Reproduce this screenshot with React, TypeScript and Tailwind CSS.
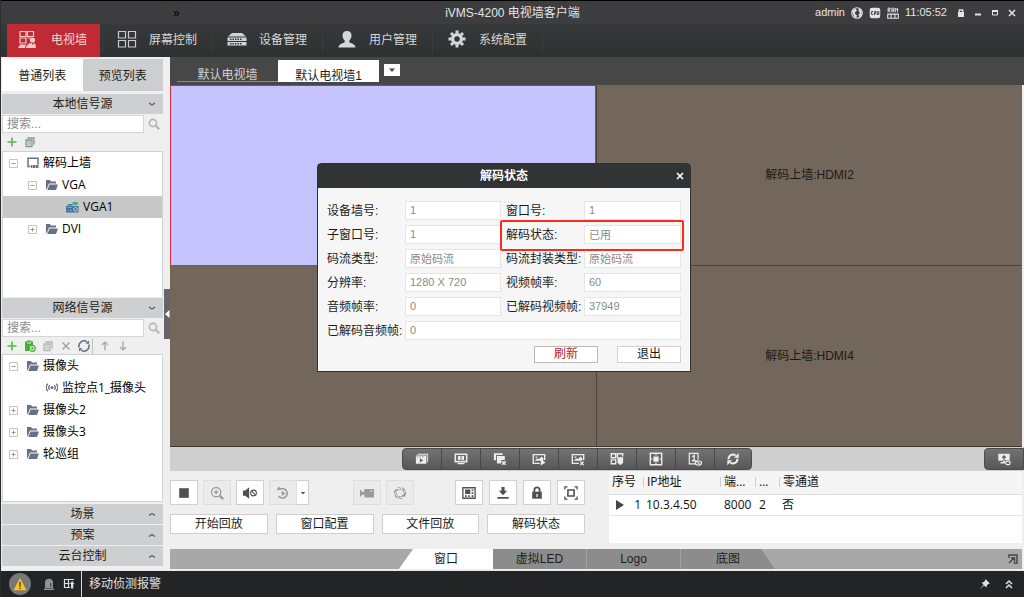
import { useState, type ReactNode } from "react";
import clsx from "clsx";

interface IconProps {
  children: ReactNode;
  className?: string;
  box?: string;
}

function Icon({ children, className = "size-4", box = "0 0 16 16" }: IconProps) {
  return (
    <svg viewBox={box} className={clsx("shrink-0", className)} fill="currentColor" aria-hidden="true">
      {children}
    </svg>
  );
}

const line = { fill: "none", stroke: "currentColor" };

/* ---------- icons ---------- */

const WallIcon = () => (
  <Icon className="size-5 text-[#f3c9c9]" box="0 0 20 20">
    <g {...line} strokeWidth="1.2">
      <path d="M3 1.5h6v5H3zM10.500 1.500h6v5h-6zM3 8h6v5H3zM10.500 8h3" />
    </g>
    <circle cx="15.500" cy="10" r="2.600" />
    <path d="M9 18c.5-3.500 3-5 5.500-5l1 2 1.500-2c1.500.5 2 2.500 2 5zM1 18l2-3.500h6L8 18z" />
  </Icon>
);

const GridIcon = () => (
  <Icon className="size-5 text-[#c9cbcb]" box="0 0 20 20">
    <path {...line} strokeWidth="1.200" d="M1.500 1.500h7v6.500h-7zM11.500 1.500h7v6.500h-7zM1.500 10.500h7V17h-7zM11.500 10.500h7V17h-7z" />
  </Icon>
);

const DeviceIcon = () => (
  <Icon className="size-5 text-[#d2d4d4]" box="0 0 20 20">
    <path d="M5 3h10l4 3.500H1zM.5 7.500h19v3.500H.5zM.5 12h19v3.500H.5z" />
    <path stroke="#303435" strokeWidth="1.500" strokeDasharray="1.500 1" d="M3 9.300h12M3 13.800h12" />
  </Icon>
);

const UserIcon = () => (
  <Icon className="size-5 text-[#d6d7d7]" box="0 0 20 20">
    <path d="M10 1c3 0 4.500 2 4.500 4.600 0 2-.9 3.900-2.200 5v1.600c.8 1 6.200 1.500 6.200 5.300H1.500c0-3.800 5.400-4.300 6.200-5.300v-1.600c-1.300-1.100-2.200-3-2.200-5C5.500 3 7 1 10 1z" />
  </Icon>
);

const GearIcon = () => (
  <Icon className="size-5 text-[#d6d7d7]" box="0 0 20 20">
    <circle cx="10" cy="9" r="4.400" {...line} strokeWidth="3.400" />
    <g stroke="currentColor" strokeWidth="3">
      <path d="M10 .5v3M10 14.500v3M1.500 9h3M15.500 9h3M4 3l2 2M14 13l2 2M4 15l2-2M14 5l2-2" />
    </g>
  </Icon>
);

const FolderIcon = () => (
  <Icon className="size-3 text-[#667186]" box="0 0 12 12">
    <path d="M0 1h4l1 1.500h5V4.500H3L.8 10H0z" />
    <path d="M3.500 5.500H12L10 11H1.300z" />
  </Icon>
);

const MonitorIcon = () => (
  <Icon className="size-3 text-[#667186]" box="0 0 12 12">
    <path {...line} strokeWidth="1.500" d="M3.500 9.500H1V1.200h10v6.300" />
    <path d="M4 8h1.500v3H4zM6 8h2v3H6zM8.500 8h3v3h-3z" />
  </Icon>
);

const EncoderIcon = () => (
  <Icon className="size-3.5 text-[#44749e]" box="0 0 14 14">
    <path d="M1 6h12.500v6.500H1z" />
    <circle cx="10.500" cy="9.300" r="1.800" fill="none" stroke="#c8d6e2" />
    <path d="M2 7.500h5M2 10.500h1.500M5 10.500h2" stroke="#7fa3c2" />
    <path d="M2 5.500 3.500 4h4v1.500z" />
    <path d="M7 3.500c1.500-2.500 5-2.500 6.500 0-1.500 2-5 2-6.500 0z" fill="#3fae82" />
  </Icon>
);

const SignalIcon = () => (
  <Icon className="size-3 text-[#667186]" box="0 0 12 12">
    <circle cx="6" cy="5.500" r="1.500" />
    <path {...line} strokeWidth="1.300" d="M3.800 3.200a3.300 3.300 0 0 0 0 4.600M8.200 3.200a3.300 3.300 0 0 1 0 4.600M1.800 1.800a5.200 5.200 0 0 0 0 7.400M10.200 1.800a5.200 5.200 0 0 1 0 7.400" />
  </Icon>
);

const PlusIcon = () => (
  <Icon className="size-3 text-[#5cb947]" box="0 0 12 12">
    <path {...line} strokeWidth="1.600" d="M6 1.500v9M1.500 6h9" />
  </Icon>
);

const CopyIcon = ({ className }: { className: string }) => (
  <Icon className={clsx("size-3", className)} box="0 0 12 12">
    <path {...line} strokeWidth="1.300" d="M4 2.500V2h6v6h-.5M2 4h6v6.500H2z" />
    <path {...line} d="M3 6h4M3 8h4" />
  </Icon>
);

const SearchIcon = () => (
  <Icon className="size-3 text-[#b5b5b7]" box="0 0 12 12">
    <circle cx="5" cy="5" r="3.600" {...line} strokeWidth="1.600" />
    <path {...line} strokeWidth="2.200" d="m7.800 7.800 3.400 3.400" />
  </Icon>
);

const Chevron = ({ up }: { up?: boolean }) => (
  <Icon className="size-2 text-[#626262]" box="0 0 8 8">
    <path {...line} strokeWidth="1.400" d={up ? "M1 5.500 4 3.500l3 2" : "M1 3l3 2 3-2"} />
  </Icon>
);

/* ---------- header ---------- */

function TitleBar() {
  return (
    <header className="grid h-6 grid-cols-[1fr_auto_1fr] items-center border-t border-black bg-[#3d3d40] text-[#e4e4e4]">
      <span className="pl-[172px] text-xs leading-4 text-black">»</span>
      <h1 className="text-xs font-normal">iVMS-4200 电视墙客户端</h1>
      <div className="flex items-center justify-end gap-1.5 pr-1">
        <span className="text-[11px]">admin</span>
        <Icon className="size-3">
          <circle cx="8" cy="8" r="7" {...line} strokeWidth="1.600" />
          <path d="M1.500 6 6 2l2 3-3 2 1 3 2 1-1 4-3-3zM10 2l4 3v5l-3 4-1-4 2-2-2-3z" />
        </Icon>
        <Icon className="size-3">
          <rect x="1" y="1" width="14" height="14" rx="3" />
          <path stroke="#3d3d40" strokeWidth="1.300" fill="none" d="M5.500 6H3.500v4h2M7.500 11V6H9v2.500H7.500M11 5.500V10h2V5.500" />
        </Icon>
        <Icon className="size-3">
          <path {...line} strokeWidth="1.300" d="M1.500 7V1.500H4V4H2l2.500 3M6.500 7V1.500h2.500V7M6.500 4.500H9M11 7V1.500l1.500 2 1.500-2V7" />
          <path {...line} strokeWidth="1.500" d="M1 9.500h14V15H1zM5.500 9.500V15M10.500 9.500V15" />
        </Icon>
        <time className="text-[11px]">11:05:52</time>
        <div className="flex gap-px">
          <button aria-label="锁定" className="grid size-4 place-items-center">
            <Icon className="size-2" box="0 0 8 8">
              <path d="M1 3h6v5H1z" />
              <path {...line} strokeWidth="1.300" d="M2.300 4V1h3.400v3" />
            </Icon>
          </button>
          <button aria-label="最小化" className="grid size-4 place-items-center">
            <Icon className="size-2" box="0 0 8 8"><path d="M1 4.500h6v2H1z" /></Icon>
          </button>
          <button aria-label="最大化" className="grid size-4 place-items-center">
            <Icon className="size-2" box="0 0 8 8"><path {...line} d="M1.500 2h5v4h-5z" /><path d="M1 1h6v2H1z" /></Icon>
          </button>
          <button aria-label="关闭" className="grid size-4 place-items-center">
            <Icon className="size-2" box="0 0 8 8"><path {...line} strokeWidth="1.500" d="m1 1 6 6M7 1 1 7" /></Icon>
          </button>
        </div>
      </div>
    </header>
  );
}

const navItems = [
  { label: "屏幕控制", icon: <GridIcon /> },
  { label: "设备管理", icon: <DeviceIcon /> },
  { label: "用户管理", icon: <UserIcon /> },
  { label: "系统配置", icon: <GearIcon /> },
];

function MainNav() {
  return (
    <nav className="flex h-[33px] bg-linear-to-b from-[#35393a] to-[#2d3132] pl-1.5 text-xs text-[#d8d8d8]">
      <button className="mr-0.5 flex w-[93px] items-center gap-3.5 bg-[#bf2a33] pb-0.5 pl-2.5 text-[#f3d5d6]">
        <WallIcon />
        电视墙
      </button>
      {navItems.map((item) => (
        <button key={item.label} className="my-1 flex w-[110px] items-center gap-3 border-l border-[#383d3e] pb-0.5 pl-3.5">
          {item.icon}
          {item.label}
        </button>
      ))}
      <span className="my-1 border-l border-[#383d3e]" />
    </nav>
  );
}

/* ---------- sidebar ---------- */

interface TreeRowProps {
  label: string;
  icon: ReactNode;
  level?: number;
  toggle?: "open" | "closed";
  selected?: boolean;
}

const indents = ["pl-1", "pl-[23px]", "pl-[42px]"];

function TreeRow({ label, icon, level = 0, toggle, selected }: TreeRowProps) {
  return (
    <li className={clsx("flex h-[22px] items-center gap-1 text-black", indents[level], selected && "bg-[#c8c8c8]")}>
      <span className="mr-1 grid size-3 place-items-center">
        {toggle && (
          <Icon className="size-[9px] text-[#c4c4c4]" box="0 0 9 9">
            <path {...line} d="M.5.5h8v8h-8z" />
            <path {...line} className="text-[#999]" d={toggle === "open" ? "M2.500 4.500h4" : "M2.500 4.500h4M4.500 2.500v4"} />
          </Icon>
        )}
      </span>
      {icon}
      <span className="whitespace-nowrap">{label}</span>
    </li>
  );
}

function SectionHeader({ label, up }: { label: string; up?: boolean }) {
  return (
    <button className="mb-px grid h-5 w-full grid-cols-[1fr_auto_1fr] items-center bg-[#cecfd1] text-xs text-[#1c1c1c]">
      <span />
      {label}
      <span className="flex justify-end pr-[7px]"><Chevron up={up} /></span>
    </button>
  );
}

function SearchBox({ label }: { label: string }) {
  return (
    <div className="flex h-[18px] items-center">
      <input
        aria-label={label}
        placeholder="搜索..."
        className="h-[18px] w-[142px] border border-[#d6d6d6] bg-white px-1 text-xs outline-none placeholder:text-[#8c8c8c]"
      />
      <button aria-label={`${label}按钮`} className="grid flex-1 place-items-center"><SearchIcon /></button>
    </div>
  );
}

function Sidebar() {
  const [tab, setTab] = useState(0);

  return (
    <aside className="flex w-[163px] shrink-0 flex-col px-px pt-0.5 pb-[3px]">
      <div className="mb-[3px] flex h-8">
        {["普通列表", "预览列表"].map((label, i) => (
          <button
            key={label}
            onClick={() => setTab(i)}
            className={clsx("flex-1 pt-0.5 text-xs text-[#1c1c1c]", tab === i ? "bg-white" : "bg-[#cdcecf]")}
          >
            {label}
          </button>
        ))}
      </div>

      <SectionHeader label="本地信号源" />
      <SearchBox label="搜索本地信号源" />
      <div className="flex h-[18px] items-center gap-1.5 px-1">
        <button aria-label="添加"><PlusIcon /></button>
        <button aria-label="复制"><CopyIcon className="text-[#82979b]" /></button>
      </div>
      <ul className="mb-px min-h-[146px] border-x border-t border-[#d0d1d2] bg-white font-['Open_Sans','Noto_Sans_CJK_SC',sans-serif] text-xs">
        <TreeRow label="解码上墙" toggle="open" icon={<MonitorIcon />} />
        <TreeRow label="VGA" level={1} toggle="open" icon={<FolderIcon />} />
        <TreeRow label="VGA1" level={2} icon={<EncoderIcon />} selected />
        <TreeRow label="DVI" level={1} toggle="closed" icon={<FolderIcon />} />
      </ul>

      <SectionHeader label="网络信号源" />
      <SearchBox label="搜索网络信号源" />
      <div className="flex h-[17px] items-center gap-1.5 px-1">
        <button aria-label="添加"><PlusIcon /></button>
        <button aria-label="批量添加">
          <Icon className="size-3 text-[#45b035]" box="0 0 12 12">
            <path d="M1 1.500h2V.5h4v1h2V5L5 6v5H1z" />
            <path stroke="#ededed" d="M3 3h4" />
            <circle cx="8.300" cy="8.300" r="3" {...line} strokeWidth="1.200" />
            <path {...line} d="M8.300 6.800v3M6.800 8.300h3" />
          </Icon>
        </button>
        <button aria-label="编辑"><CopyIcon className="text-[#b4b4b4]" /></button>
        <button aria-label="删除">
          <Icon className="size-3 text-[#a5a5a5]" box="0 0 12 12"><path {...line} strokeWidth="1.500" d="m2.500 2.500 7 7M9.500 2.500l-7 7" /></Icon>
        </button>
        <button aria-label="刷新">
          <Icon className="size-3 text-[#5d6e86]" box="0 0 12 12">
            <path {...line} strokeWidth="1.500" d="M1.200 7.500A5 5 0 0 1 9 2M10.800 4.500A5 5 0 0 1 3 10" />
            <path d="M7.500 3.800h3.500V.5zM4.500 8.200H1v3.300z" />
          </Icon>
        </button>
        <span className="-mx-1 h-4 border-l border-[#c2c2c4]" />
        <button aria-label="上移" className="ml-1">
          <Icon className="size-3 text-[#adadad]" box="0 0 12 12"><path {...line} strokeWidth="1.500" d="M6 10.500V2M3 5l3-3 3 3" /></Icon>
        </button>
        <button aria-label="下移">
          <Icon className="size-3 text-[#adadad]" box="0 0 12 12"><path {...line} strokeWidth="1.500" d="M6 1.500V10M3 7l3 3 3-3" /></Icon>
        </button>
      </div>
      <ul className="mb-0.5 flex-1 border border-[#d0d1d2] bg-white font-['Open_Sans','Noto_Sans_CJK_SC',sans-serif] text-xs">
        <TreeRow label="摄像头" toggle="open" icon={<FolderIcon />} />
        <TreeRow label="监控点1_摄像头" level={1} icon={<SignalIcon />} />
        <TreeRow label="摄像头2" toggle="closed" icon={<FolderIcon />} />
        <TreeRow label="摄像头3" toggle="closed" icon={<FolderIcon />} />
        <TreeRow label="轮巡组" toggle="closed" icon={<FolderIcon />} />
      </ul>

      <SectionHeader label="场景" up />
      <SectionHeader label="预案" up />
      <SectionHeader label="云台控制" up />
    </aside>
  );
}

/* ---------- video wall ---------- */

function WallTabs() {
  return (
    <div className="flex h-7 items-end bg-[#474747] pb-[3px] pl-[7px] text-xs">
      <button className="flex h-5 w-[101px] items-end justify-center border-b border-[#8b8b8f] leading-3 text-[#d0d0d0]">默认电视墙</button>
      <button className="flex h-[22px] w-[101px] items-end justify-center bg-white leading-3 text-[#1c1c1c]">默认电视墙1</button>
      <button aria-label="更多电视墙" className="mb-1.5 ml-[5px] grid h-3 w-4 place-items-center bg-white">
        <Icon className="size-2 text-[#444]" box="0 0 8 8"><path d="M1 2.500h6L4 6z" /></Icon>
      </button>
    </div>
  );
}

function VideoWall() {
  return (
    <section className="mr-0.5 grid flex-1 grid-cols-2 grid-rows-2 border-b border-[#3c3835] text-xs text-[#1e1a17]">
      <div className="border border-[#d82a3e] bg-[#c6c4ff]" />
      <div className="grid place-items-center border-b border-l border-[#4c443d] bg-[#73665a]">解码上墙:HDMI2</div>
      <div className="bg-[#73665a]" />
      <div className="grid place-items-center border-l border-[#4c443d] bg-[#73665a]">解码上墙:HDMI4</div>
    </section>
  );
}

const wallTools = [
  { label: "播放", icon: <><path d="M3 2h12v9.500h-1V3H3z" /><path d="M1 4h12v9.500H1z" /><path fill="#666" d="M2 5h1.500v1H2zM5 5h1.500v1H5zM8 5h1.500v1H8zM5.500 7l4 2.500-4 2.500z" /></> },
  { label: "暂停", icon: <><path {...line} strokeWidth="1.800" d="M1.500 2.500h13v8.500h-13z" /><path d="M4.500 4.500h3v4.500h-3zM8.500 4.500h3v4.500h-3zM4 12.500h8V14H4z" /></> },
  { label: "关闭窗口", icon: <><path d="M1 1.500h10v2H3.500v6H1z" /><path d="M4.500 4.500h9V9h-4v4h-5z" /><path {...line} strokeWidth="1.800" d="m10.500 10.500 4 4M14.500 10.500l-4 4" /></> },
  { label: "轮巡开始", icon: <><path {...line} strokeWidth="1.600" d="M9 13H1.500V3h13v6" /><path d="m3 10 3-3 2 1 3-3 2 2v3H3zM10 8.500l5.500 3.500-5.500 3.500zM4 5h2v1.500H4z" /></> },
  { label: "轮巡停止", icon: <><path {...line} strokeWidth="1.600" d="M9 13H1.500V3h13v6" /><path d="m3 10 3-3 2 1 3-3 2 2v3H3zM4 5h2v1.500H4z" /><path {...line} strokeWidth="1.600" d="m10.500 11 4 4M14.500 11l-4 4" /></> },
  { label: "布局", icon: <><path {...line} strokeWidth="1.600" d="M1.500 2h5v4.500h-5zM8.500 6.500V2h6v3M1.500 9h5v4.500h-5z" /><path d="M8.500 6H15v6l-2 2.500h-2L8.500 12z" /></> },
  { label: "全屏", icon: <><path {...line} strokeWidth="1.600" d="M1.500 1.500h13v13h-13z" /><path d="M5 5h6v6H5zM7.300 2h1.400v2H7.300zM7.300 12h1.400v2H7.300zM2 7.300h2v1.400H2zM12 7.300h2v1.400h-2z" /></> },
  { label: "窗口编号", icon: <><path {...line} strokeWidth="1.400" d="M8.500 13.500h-7v-12h10v7" /><path {...line} strokeWidth="1.600" d="m5 5.500 2-1.500v6M4.500 10H9" /><ellipse cx="12" cy="12.500" rx="3.500" ry="2.500" {...line} strokeWidth="1.400" /><path {...line} strokeWidth="1.300" d="m9.500 10 5 5" /></> },
  { label: "刷新", icon: <><path {...line} strokeWidth="2.400" d="M3 8.500A5 5 0 0 1 11 4M13 7.500A5 5 0 0 1 5 12" /><path d="M9 6.500h5.500V1zM7 9.500H1.500V15z" /></> },
];

function WallToolbar() {
  return (
    <div className="flex h-6 items-start bg-[#cdcfd1] pt-px text-[#ececec]">
      <div className="ml-[232px] flex overflow-hidden rounded-sm border border-[#4b4b4b] bg-linear-to-b from-[#737373] to-[#575757]">
        {wallTools.map((tool) => (
          <button key={tool.label} aria-label={tool.label} className="grid h-5 w-[39px] place-items-center border-r border-[#484848] last:w-9 last:border-r-0">
            <Icon className="size-3.5">{tool.icon}</Icon>
          </button>
        ))}
      </div>
      <button aria-label="上传画面" className="ml-auto grid h-[22px] w-10 place-items-center rounded-l-sm border border-[#4b4b4b] bg-linear-to-b from-[#737373] to-[#575757]">
        <Icon className="size-3.5">
          <path d="M1.500 2h13v7.500H9V13H4v-1.500h3V10H1.500z" />
          <path {...line} stroke="#5f5f5f" strokeWidth="1.500" d="M8 10V5M6 6.500 8 4.500l2 2" />
          <ellipse cx="12.500" cy="12.500" rx="2.500" ry="2" {...line} strokeWidth="1.300" />
        </Icon>
      </button>
    </div>
  );
}

/* ---------- bottom panel ---------- */

interface ToolButtonProps {
  label: string;
  children: ReactNode;
  disabled?: boolean;
}

function ToolButton({ label, children, disabled }: ToolButtonProps) {
  return (
    <button
      aria-label={label}
      disabled={disabled}
      className={clsx(
        "grid h-[25px] w-7 place-items-center border",
        disabled ? "border-[#dedede] bg-[#ebebeb] text-[#9b9b9b]" : "border-[#d0d0d0] bg-white text-[#505050]"
      )}
    >
      <Icon className="size-3.5">{children}</Icon>
    </button>
  );
}

function ControlPanel() {
  return (
    <div className="w-[439px] shrink-0 pt-[9px] pb-[15px]">
      <div className="flex w-[415px] items-center gap-[5px]">
        <ToolButton label="停止"><path d="M2.500 2.500h11v11h-11z" /></ToolButton>
        <ToolButton label="电子放大" disabled>
          <circle cx="7" cy="7" r="5.300" {...line} strokeWidth="1.500" />
          <path {...line} strokeWidth="1.500" d="M7 4.500v5M4.500 7h5" />
          <path {...line} strokeWidth="2.600" d="m11 11 4 4" />
        </ToolButton>
        <ToolButton label="静音">
          <path d="M0 5h2.500L7 1.500v13L2.500 11H0z" />
          <circle cx="12" cy="8" r="3.300" {...line} strokeWidth="1.200" />
          <path {...line} strokeWidth="1.200" d="m9.700 5.700 4.600 4.600" />
        </ToolButton>
        <div className="flex">
          <ToolButton label="即时回放" disabled>
            <path {...line} strokeWidth="1.800" d="M2 3.200h6.500a5.300 5.300 0 1 1-5.500 8" />
            <path d="M1 5.500 6 3.500 3 .5zM6.500 5.500l4.500 3-4.500 3z" />
          </ToolButton>
          <button aria-label="回放时长" className="grid h-[25px] w-3 place-items-center border border-l-0 border-[#d0d0d0] bg-white">
            <Icon className="size-1.5 text-[#555]" box="0 0 8 8"><path d="M1 2.500h6L4 6z" /></Icon>
          </button>
        </div>
        <div className="ml-auto flex gap-[5px] pr-9">
          <ToolButton label="录像" disabled><path d="M5 3.500h11v9.500H5zM0 4.500h1.700v7.500H0zM1.500 6.500H5v3.500H1.500z" /><path fill="#ebebeb" d="M12 5h2v1.300h-2z" /></ToolButton>
          <ToolButton label="抓图" disabled>
            <circle cx="8" cy="8" r="5.300" {...line} strokeWidth="3.400" />
            <path stroke="#ebebeb" strokeWidth="1.300" d="m7 0 4.500 5M15 4l-4 5.500M14.500 13H8M8 16l-4-6M1 11l3.500-5M2 3h6" />
          </ToolButton>
        </div>
        <div className="flex gap-1.5">
          <ToolButton label="键盘">
            <path {...line} strokeWidth="1.500" d="M1 2h14v12H1z" />
            <path d="M3.500 4h6v5h-6zM11 4h2v1.800h-2zM11 7h2v2h-2zM3.500 10.500h2v2h-2zM7 10.500h2v2H7zM11 10.500h2v2h-2z" />
          </ToolButton>
          <ToolButton label="下载"><path d="M6.200 1h3.600v4.500h3L8 10.500 3.200 5.500h3zM1.500 12.500h13v2.200h-13z" /></ToolButton>
          <ToolButton label="锁定窗口">
            <path d="M2.500 6.500h11v8h-11z" />
            <path {...line} strokeWidth="2" d="M5 7V4.500a3 3 0 0 1 6 0V7" />
            <path fill="#fff" d="M7.300 9h1.400v3.500H7.300z" />
          </ToolButton>
          <ToolButton label="全屏显示">
            <path {...line} strokeWidth="1.800" d="M4.500 4.500h7v7h-7z" />
            <path {...line} strokeWidth="1.500" d="M1 4V1h3M12 1h3v3M15 12v3h-3M4 15H1v-3" />
          </ToolButton>
        </div>
      </div>
      <div className="mt-[9px] flex w-[415px] gap-2 text-xs text-[#1c1c1c]">
        {["开始回放", "窗口配置", "文件回放", "解码状态"].map((label) => (
          <button key={label} className="h-5 flex-1 border border-[#cfcfcf] bg-white leading-4">{label}</button>
        ))}
      </div>
    </div>
  );
}

const columns = [
  { label: "IP地址", width: "w-[77px]" },
  { label: "端...", width: "w-[35px]" },
  { label: "...", width: "w-6" },
  { label: "零通道", width: "" },
];

function DeviceTable() {
  return (
    <div className="mr-0.5 mb-1.5 flex-1 bg-white">
      <table className="w-full table-fixed border-collapse text-left font-['Open_Sans','Noto_Sans_CJK_SC',sans-serif] text-xs text-[#111]">
        <thead>
          <tr className="h-[23px] border-b border-[#dcdcdc] bg-[#f5f5f5]">
            <th className="w-[34px] pl-[3px] font-normal whitespace-nowrap">序号</th>
            {columns.map((column) => (
              <th key={column.label} className={clsx("font-normal whitespace-nowrap", column.width)}>
                <span className="inline-block border-l border-[#cfcfcf] pl-[3px] leading-[10px]">{column.label}</span>
              </th>
            ))}
          </tr>
        </thead>
        <tbody>
          <tr className="h-[21px] border-b border-[#e4e4e4]">
            <td>
              <span className="flex items-center justify-between pr-0.5 pl-1.5">
                <Icon className="size-2.5 text-[#444]" box="0 0 10 10"><path d="M1 0l8 5-8 5z" /></Icon>
                1
              </span>
            </td>
            <td className="pl-[3px]">10.3.4.50</td>
            <td className="pl-1">8000</td>
            <td className="pl-1">2</td>
            <td className="pl-[3px]">否</td>
          </tr>
        </tbody>
      </table>
    </div>
  );
}

function BottomTabs() {
  return (
    <div className="mr-0.5 mb-px flex h-5 items-stretch bg-[#a8a8a8] text-xs text-[#1c1c1c]">
      <button className="ml-[229px] w-[94px] bg-white [clip-path:polygon(14px_0,100%_0,100%_100%,0_100%)]">窗口</button>
      <button className="w-[94px] border-r border-[#a3a3a3] bg-[#8c8c8c]">虚拟LED</button>
      <button className="w-[94px] border-r border-[#a3a3a3] bg-[#8c8c8c]">Logo</button>
      <button className="w-[94px] bg-[#8c8c8c] [clip-path:polygon(0_0,80px_0,100%_100%,0_100%)]">底图</button>
      <button aria-label="弹出" className="mr-1 ml-auto">
        <Icon className="size-2.5 text-[#444]" box="0 0 10 10">
          <path {...line} strokeWidth="1.400" d="M1 4V1h8v8H5.500M1 9l5-5M3 4h3.500v3.500" />
        </Icon>
      </button>
    </div>
  );
}

/* ---------- decode status dialog ---------- */

const fields = [
  { id: "wall", label: "设备墙号:", value: "1" },
  { id: "window", label: "窗口号:", value: "1" },
  { id: "subwindow", label: "子窗口号:", value: "1" },
  { id: "status", label: "解码状态:", value: "已用" },
  { id: "stream", label: "码流类型:", value: "原始码流" },
  { id: "package", label: "码流封装类型:", value: "原始码流" },
  { id: "resolution", label: "分辨率:", value: "1280 X 720" },
  { id: "vfps", label: "视频帧率:", value: "60" },
  { id: "afps", label: "音频帧率:", value: "0" },
  { id: "vframes", label: "已解码视频帧:", value: "37949" },
  { id: "aframes", label: "已解码音频帧:", value: "0", wide: true },
];

function StatusDialog() {
  const [open, setOpen] = useState(true);
  if (!open) return null;

  return (
    <div role="dialog" aria-labelledby="dialog-title" className="absolute top-[163px] left-[316px] w-[374px] rounded-t-sm border border-[#2f3031] bg-[#f6f6f6]">
      <div className="grid h-6 grid-cols-[1fr_auto_1fr] items-center bg-[#313335] text-white">
        <h2 id="dialog-title" className="col-start-2 text-xs font-bold">解码状态</h2>
        <button aria-label="关闭对话框" onClick={() => setOpen(false)} className="mr-1.5 justify-self-end">
          <Icon className="size-2" box="0 0 8 8"><path {...line} strokeWidth="1.700" d="m1 1 6 6M7 1 1 7" /></Icon>
        </button>
      </div>
      <div className="relative px-[9px] pt-[13px] pb-2">
        <div className="grid grid-cols-[174px_175px] gap-[5px]">
          {fields.map((field) => (
            <div key={field.id} className={clsx("flex items-center", field.wide && "col-span-2")}>
              <label htmlFor={field.id} className="w-[78px] shrink-0 text-xs leading-[18px] whitespace-nowrap text-[#1c1c1c]">
                {field.label}
              </label>
              <input
                id={field.id}
                readOnly
                value={field.value}
                className="h-[19px] min-w-0 flex-1 border border-[#e6e6e6] bg-white px-1 pb-px text-[11px] text-[#8a8a8a] outline-none"
              />
            </div>
          ))}
        </div>
        {/* highlight frame around the decode status field */}
        <div className="pointer-events-none absolute top-8 right-1.5 h-[31px] w-[184px] rounded-xs border-2 border-[#fb2a1c]" />
        <div className="mt-1.5 flex justify-end gap-[19px] text-xs">
          <button className="h-[17px] w-16 border border-[#b9b9b9] bg-white leading-[15px] text-[#b3262e]">刷新</button>
          <button onClick={() => setOpen(false)} className="h-[17px] w-16 border border-[#d2d2d2] bg-white leading-[15px] text-[#1c1c1c]">退出</button>
        </div>
      </div>
    </div>
  );
}

/* ---------- footer ---------- */

function StatusBar() {
  return (
    <footer className="flex h-[27px] items-center border-t border-[#e8e8e8] bg-[#222426] text-xs text-[#e0e0e0]">
      <span className="ml-2 grid size-[22px] place-items-center rounded-full bg-[#77777a]">
        <Icon className="size-3.5">
          <path fill="#fcc11d" d="m8 1 7.500 14H.5z" />
          <path stroke="#5a4a1c" strokeWidth="1.700" d="M8 5.500V11M8 12v1.700" />
        </Icon>
      </span>
      <button aria-label="报警" className="ml-3">
        <Icon className="size-3 text-[#929292]" box="0 0 12 12">
          <path d="M2 10V4.500C2 2 3.500.8 6 .8S10 2 10 4.500V10zM1 10.500h10V12H1z" />
          <path fill="#555" d="M7 5h1.500v4H7z" />
        </Icon>
      </button>
      <button aria-label="报警列表" className="ml-2">
        <Icon className="size-3" box="0 0 12 12">
          <path {...line} strokeWidth="1.200" d="M11 1.500H1.500v8H7M1.500 5.500h5M5.500 1.500v8" />
          <path d="M8 10.500V6H6.800L9.200 3l2.300 3h-1.200v4.500z" />
        </Icon>
      </button>
      <span className="ml-1.5 self-stretch border-l border-[#d8d8d8] pl-[7px]" />
      移动侦测报警
      <button aria-label="固定" className="ml-auto">
        <Icon className="size-2.5" box="0 0 10 10"><path d="M5.500 0 10 4.500l-1.500.3-1.700 1.700-.3 2L4 6.500 0 10l3.500-4.200L1.500 3.500l2-.3 1.700-1.700z" /></Icon>
      </button>
      <button aria-label="展开" className="mr-2.5 ml-3.5">
        <Icon className="size-2.5" box="0 0 10 10"><path {...line} strokeWidth="1.500" d="m2 5 3-3 3 3M2 9l3-3 3 3" /></Icon>
      </button>
    </footer>
  );
}

export default function App() {
  return (
    <div className="relative flex min-h-screen flex-col border-l border-[#2c2c2c] bg-[#efefef] font-['Liberation_Sans','Noto_Sans_CJK_SC',sans-serif]">
      <TitleBar />
      <MainNav />
      <main className="flex flex-1">
        <Sidebar />
        <div className="flex w-1.5 shrink-0 items-center">
          <button aria-label="收起侧栏" className="grid h-[50px] w-1.5 place-items-center bg-[#656567] text-white">
            <Icon className="h-2 w-1.5" box="0 0 6 8"><path d="M5.500 0v8L1 4z" /></Icon>
          </button>
        </div>
        <div className="flex min-w-0 flex-1 flex-col">
          <WallTabs />
          <VideoWall />
          <WallToolbar />
          <div className="flex">
            <ControlPanel />
            <DeviceTable />
          </div>
          <BottomTabs />
        </div>
      </main>
      <StatusBar />
      <StatusDialog />
    </div>
  );
}
